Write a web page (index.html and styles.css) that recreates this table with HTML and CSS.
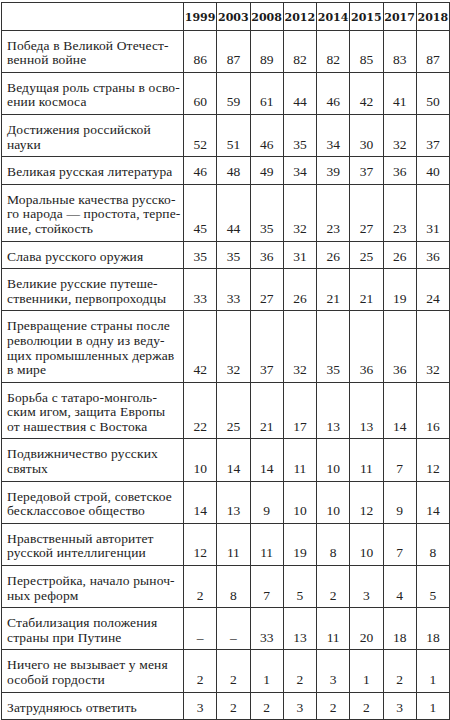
FILE: index.html
```html
<!DOCTYPE html>
<html lang="ru">
<head>
<meta charset="utf-8">
<title>Гордость</title>
<link rel="stylesheet" href="styles.css">
</head>
<body>
<table class="tbl">
<colgroup>
<col class="c-label">
<col class="c-num"><col class="c-num"><col class="c-num"><col class="c-num">
<col class="c-num"><col class="c-num"><col class="c-num"><col class="c-num">
</colgroup>
<thead>
<tr><th class="label"></th><th>1999</th><th>2003</th><th>2008</th><th>2012</th><th>2014</th><th>2015</th><th>2017</th><th>2018</th></tr>
</thead>
<tbody>
<tr><td class="label">Победа в Великой Отечест-<br>венной войне</td><td>86</td><td>87</td><td>89</td><td>82</td><td>82</td><td>85</td><td>83</td><td>87</td></tr>
<tr><td class="label">Ведущая роль страны в осво-<br>ении космоса</td><td>60</td><td>59</td><td>61</td><td>44</td><td>46</td><td>42</td><td>41</td><td>50</td></tr>
<tr><td class="label">Достижения российской<br>науки</td><td>52</td><td>51</td><td>46</td><td>35</td><td>34</td><td>30</td><td>32</td><td>37</td></tr>
<tr><td class="label">Великая русская литература</td><td>46</td><td>48</td><td>49</td><td>34</td><td>39</td><td>37</td><td>36</td><td>40</td></tr>
<tr><td class="label">Моральные качества русско-<br>го народа — простота, терпе-<br>ние, стойкость</td><td>45</td><td>44</td><td>35</td><td>32</td><td>23</td><td>27</td><td>23</td><td>31</td></tr>
<tr><td class="label">Слава русского оружия</td><td>35</td><td>35</td><td>36</td><td>31</td><td>26</td><td>25</td><td>26</td><td>36</td></tr>
<tr><td class="label">Великие русские путеше-<br>ственники, первопроходцы</td><td>33</td><td>33</td><td>27</td><td>26</td><td>21</td><td>21</td><td>19</td><td>24</td></tr>
<tr><td class="label">Превращение страны после<br>революции в одну из веду-<br>щих промышленных держав<br>в мире</td><td>42</td><td>32</td><td>37</td><td>32</td><td>35</td><td>36</td><td>36</td><td>32</td></tr>
<tr><td class="label">Борьба с татаро-монголь-<br>ским игом, защита Европы<br>от нашествия с Востока</td><td>22</td><td>25</td><td>21</td><td>17</td><td>13</td><td>13</td><td>14</td><td>16</td></tr>
<tr><td class="label">Подвижничество русских<br>святых</td><td>10</td><td>14</td><td>14</td><td>11</td><td>10</td><td>11</td><td>7</td><td>12</td></tr>
<tr><td class="label">Передовой строй, советское<br>бесклассовое общество</td><td>14</td><td>13</td><td>9</td><td>10</td><td>10</td><td>12</td><td>9</td><td>14</td></tr>
<tr><td class="label">Нравственный авторитет<br>русской интеллигенции</td><td>12</td><td>11</td><td>11</td><td>19</td><td>8</td><td>10</td><td>7</td><td>8</td></tr>
<tr><td class="label">Перестройка, начало рыноч-<br>ных реформ</td><td>2</td><td>8</td><td>7</td><td>5</td><td>2</td><td>3</td><td>4</td><td>5</td></tr>
<tr><td class="label">Стабилизация положения<br>страны при Путине</td><td>–</td><td>–</td><td>33</td><td>13</td><td>11</td><td>20</td><td>18</td><td>18</td></tr>
<tr><td class="label">Ничего не вызывает у меня<br>особой гордости</td><td>2</td><td>2</td><td>1</td><td>2</td><td>3</td><td>1</td><td>2</td><td>1</td></tr>
<tr><td class="label">Затрудняюсь ответить</td><td>3</td><td>2</td><td>2</td><td>3</td><td>2</td><td>2</td><td>3</td><td>1</td></tr>
</tbody>
</table>
</body>
</html>
```

FILE: styles.css
```css
html, body {
  background: #ffffff;
}
body {
  margin: 2px 0 0 1px;
  font-family: "Liberation Serif", "DejaVu Serif", serif;
  font-size: 13.5px;
  color: #222;
}
.tbl {
  border-collapse: collapse;
  table-layout: fixed;
  width: 448px;
}
.c-label { width: 182px; }
.c-num { width: 33.25px; }
.tbl th,
.tbl td {
  border: 1px solid #333;
  padding: 8px 0 4px;
  line-height: 14.6px;
  text-align: center;
  vertical-align: bottom;
}
.tbl th {
  font-family: "DejaVu Serif", serif;
  font-weight: bold;
  font-size: 11px;
  color: #1a1a1a;
}
.tbl td.label {
  text-align: left;
  padding-left: 5px;
  padding-right: 2px;
  white-space: nowrap;
  vertical-align: top;
  letter-spacing: 0.15px;
}
```
